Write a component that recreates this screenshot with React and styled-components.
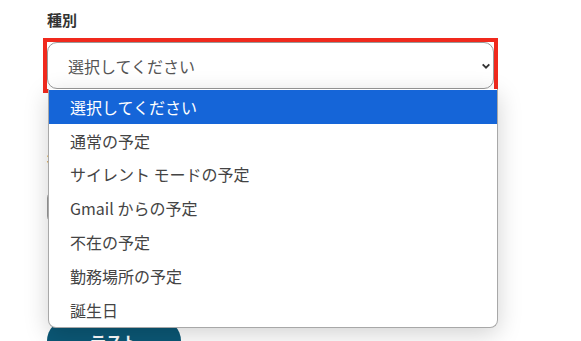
import styled, { createGlobalStyle } from 'styled-components';

const GlobalStyle = createGlobalStyle`
    body {
        margin: 0;
        background: #ffffff;
        font-family: 'Noto Sans CJK JP', 'Noto Sans', sans-serif;
    }
`;

const Page = styled.div`
    width: 581px;
    height: 341px;
    overflow: hidden;
    padding: 10px 0 0 47px;
    box-sizing: border-box;
`;

const Form = styled.div`
    width: 448px;
    display: flex;
    flex-direction: column;
`;

const Label = styled.div`
    font-size: 15px;
    font-weight: 700;
    line-height: 20px;
    color: #333333;
    margin-top: ${({ $top }) => $top || 0}px;
`;

const Highlight = styled.div`
    position: relative;
    margin: 8px 0 0 -4px;
    width: 447px;
    border: 4px solid #f0291d;
`;

const SelectBox = styled.div`
    height: 45px;
    border: 1px solid #9a9a9a;
    border-radius: 10px;
    background: #fff;
    display: flex;
    align-items: center;
    justify-content: space-between;
    padding: 0 2px 0 20px;
    font-size: 16px;
    color: #555555;
`;

const Chevron = styled.svg`
    width: 10px;
    height: 10px;
`;

const ListBox = styled.ul`
    position: absolute;
    top: 100%;
    left: 1px;
    width: 448px;
    margin: 0;
    padding: 1px 0 0;
    list-style: none;
    background: #ffffff;
    border: 1px solid #a8a8a8;
    border-top: none;
    border-radius: 0 0 8px 8px;
    box-shadow: 0 6px 24px rgba(0, 0, 0, 0.18);
    z-index: 10;
    overflow: hidden;
`;

const Option = styled.li`
    height: 33.8px;
    display: flex;
    align-items: center;
    padding-left: 21px;
    font-size: 16px;
    color: ${({ $active }) => ($active ? '#ffffff' : '#444444')};
    background: ${({ $active }) => ($active ? '#1565d8' : 'transparent')};
`;

const Input = styled.div`
    height: 32px;
    margin-top: 22px;
    border: 1px solid #9a9a9a;
    border-radius: 8px;
`;

const Button = styled.button`
    margin-top: 95px;
    width: 134px;
    height: 44px;
    border: none;
    border-radius: 22px;
    background: #0b5876;
    color: #ffffff;
    font-family: inherit;
    font-size: 16px;
    font-weight: 700;
`;

const options = [
    '選択してください',
    '通常の予定',
    'サイレント モードの予定',
    'Gmail からの予定',
    '不在の予定',
    '勤務場所の予定',
    '誕生日',
];

function App() {
    return (
        <>
            <GlobalStyle />
            <Page>
                <Form>
                    <Label>種別</Label>
                    <Highlight>
                        <SelectBox>
                            選択してください
                            <Chevron viewBox="0 0 12 12">
                                <path
                                    d="M2 4l4 4 4-4"
                                    fill="none"
                                    stroke="#333"
                                    strokeWidth="2.2"
                                />
                            </Chevron>
                        </SelectBox>
                        <ListBox>
                            {options.map((o, i) => (
                                <Option key={o} $active={i === 0}>
                                    {o}
                                </Option>
                            ))}
                        </ListBox>
                    </Highlight>
                    <Label $top={55}>名前</Label>
                    <Input />
                    <Button>テスト</Button>
                </Form>
            </Page>
        </>
    );
}

export default App;
